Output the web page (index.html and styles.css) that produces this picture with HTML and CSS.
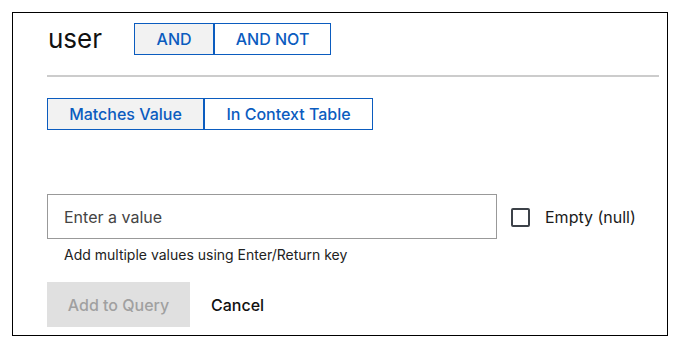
FILE: index.html
```html
<!DOCTYPE html>
<html>
  <head>
    <meta name="viewport" content="width=device-width, initial-scale=1.0" />
    <meta charset="utf-8" />
    <title>Filter</title>
    <link rel="stylesheet" href="styles.css">
  </head>
  <body>
    <div class="panel">
      <div class="panel__header">
        <h1 class="panel__title">user</h1>
        <div class="toggle">
          <button class="toggle__btn toggle__btn--active toggle__btn--and" type="button">AND</button>
          <button class="toggle__btn toggle__btn--andnot" type="button">AND NOT</button>
        </div>
      </div>
      <hr class="panel__divider" />
      <div class="toggle toggle--mode">
        <button class="toggle__btn toggle__btn--active toggle__btn--matches" type="button">Matches Value</button>
        <button class="toggle__btn toggle__btn--context" type="button">In Context Table</button>
      </div>
      <div class="value-row">
        <div class="value-row__field">
          <input class="value-row__input" type="text" placeholder="Enter a value" />
          <div class="value-row__hint">Add multiple values using Enter/Return key</div>
        </div>
        <label class="check">
          <span class="check__box"></span>
          <span class="check__label">Empty (null)</span>
        </label>
      </div>
      <div class="actions">
        <button class="actions__add" type="button" disabled>Add to Query</button>
        <button class="actions__cancel" type="button">Cancel</button>
      </div>
    </div>
  </body>
</html>
```

FILE: styles.css
```css
body {
  --color-primary: #0b5cbf;
  --color-selected: #f2f2f2;

  margin: 0;
  font-family: "Inter", "Noto Sans", sans-serif;
  background: #ffffff;
  color: #1a1a1a;
}

.panel {
  box-sizing: border-box;
  width: 656px;
  height: 324px;
  margin: 12px;
  padding: 10px 8px 0 34px;
  border: 1px solid #000000;
  background: #ffffff;
}

.panel__header {
  display: flex;
  align-items: center;
  height: 32px;
}

.panel__title {
  margin: 0 32px 0 1px;
  font-size: 26px;
  font-weight: 400;
  color: #111111;
  line-height: 32px;
}

.panel__divider {
  margin: 20px 0 0;
  border: none;
  height: 2px;
  background: #cccccc;
}

.toggle {
  display: flex;
}

.toggle--mode {
  margin-top: 21px;
}

.toggle__btn {
  box-sizing: border-box;
  height: 32px;
  padding: 0;
  border: 1px solid var(--color-primary);
  background: #ffffff;
  color: var(--color-primary);
  font: 500 16px "Inter", sans-serif;
  cursor: pointer;
}

.toggle__btn--active {
  background: var(--color-selected);
}

.toggle__btn--and {
  width: 80px;
}

.toggle__btn--andnot {
  width: 117px;
}

.toggle__btn--matches {
  width: 157px;
}

.toggle__btn--context {
  width: 169px;
}

.value-row {
  display: flex;
  align-items: flex-start;
  margin-top: 64px;
}

.value-row__field {
  width: 450px;
}

.value-row__input {
  box-sizing: border-box;
  display: block;
  width: 100%;
  height: 45px;
  padding: 0 16px;
  border: 1px solid #999999;
  border-radius: 0;
  outline: none;
  font: 400 16px "Inter", sans-serif;
  color: #222222;
}

.value-row__input::placeholder {
  color: #444444;
}

.value-row__hint {
  margin-top: 7px;
  padding-left: 17px;
  font-size: 14px;
  color: #222222;
}

.check {
  display: flex;
  align-items: center;
  margin: 13px 0 0 14px;
  cursor: pointer;
}

.check__box {
  box-sizing: border-box;
  width: 19px;
  height: 19px;
  border: 2px solid #3c4148;
  border-radius: 2px;
}

.check__label {
  margin-left: 15px;
  font-size: 16px;
  color: #1a1a1a;
}

.actions {
  display: flex;
  align-items: center;
  margin-top: 19px;
}

.actions__add {
  width: 143px;
  height: 45px;
  border: none;
  background: #e0e0e0;
  color: #a0a0a0;
  font: 500 16px "Inter", sans-serif;
}

.actions__cancel {
  margin-left: 21px;
  padding: 0;
  border: none;
  background: none;
  color: #111111;
  font: 500 16px "Inter", sans-serif;
  cursor: pointer;
}
```
